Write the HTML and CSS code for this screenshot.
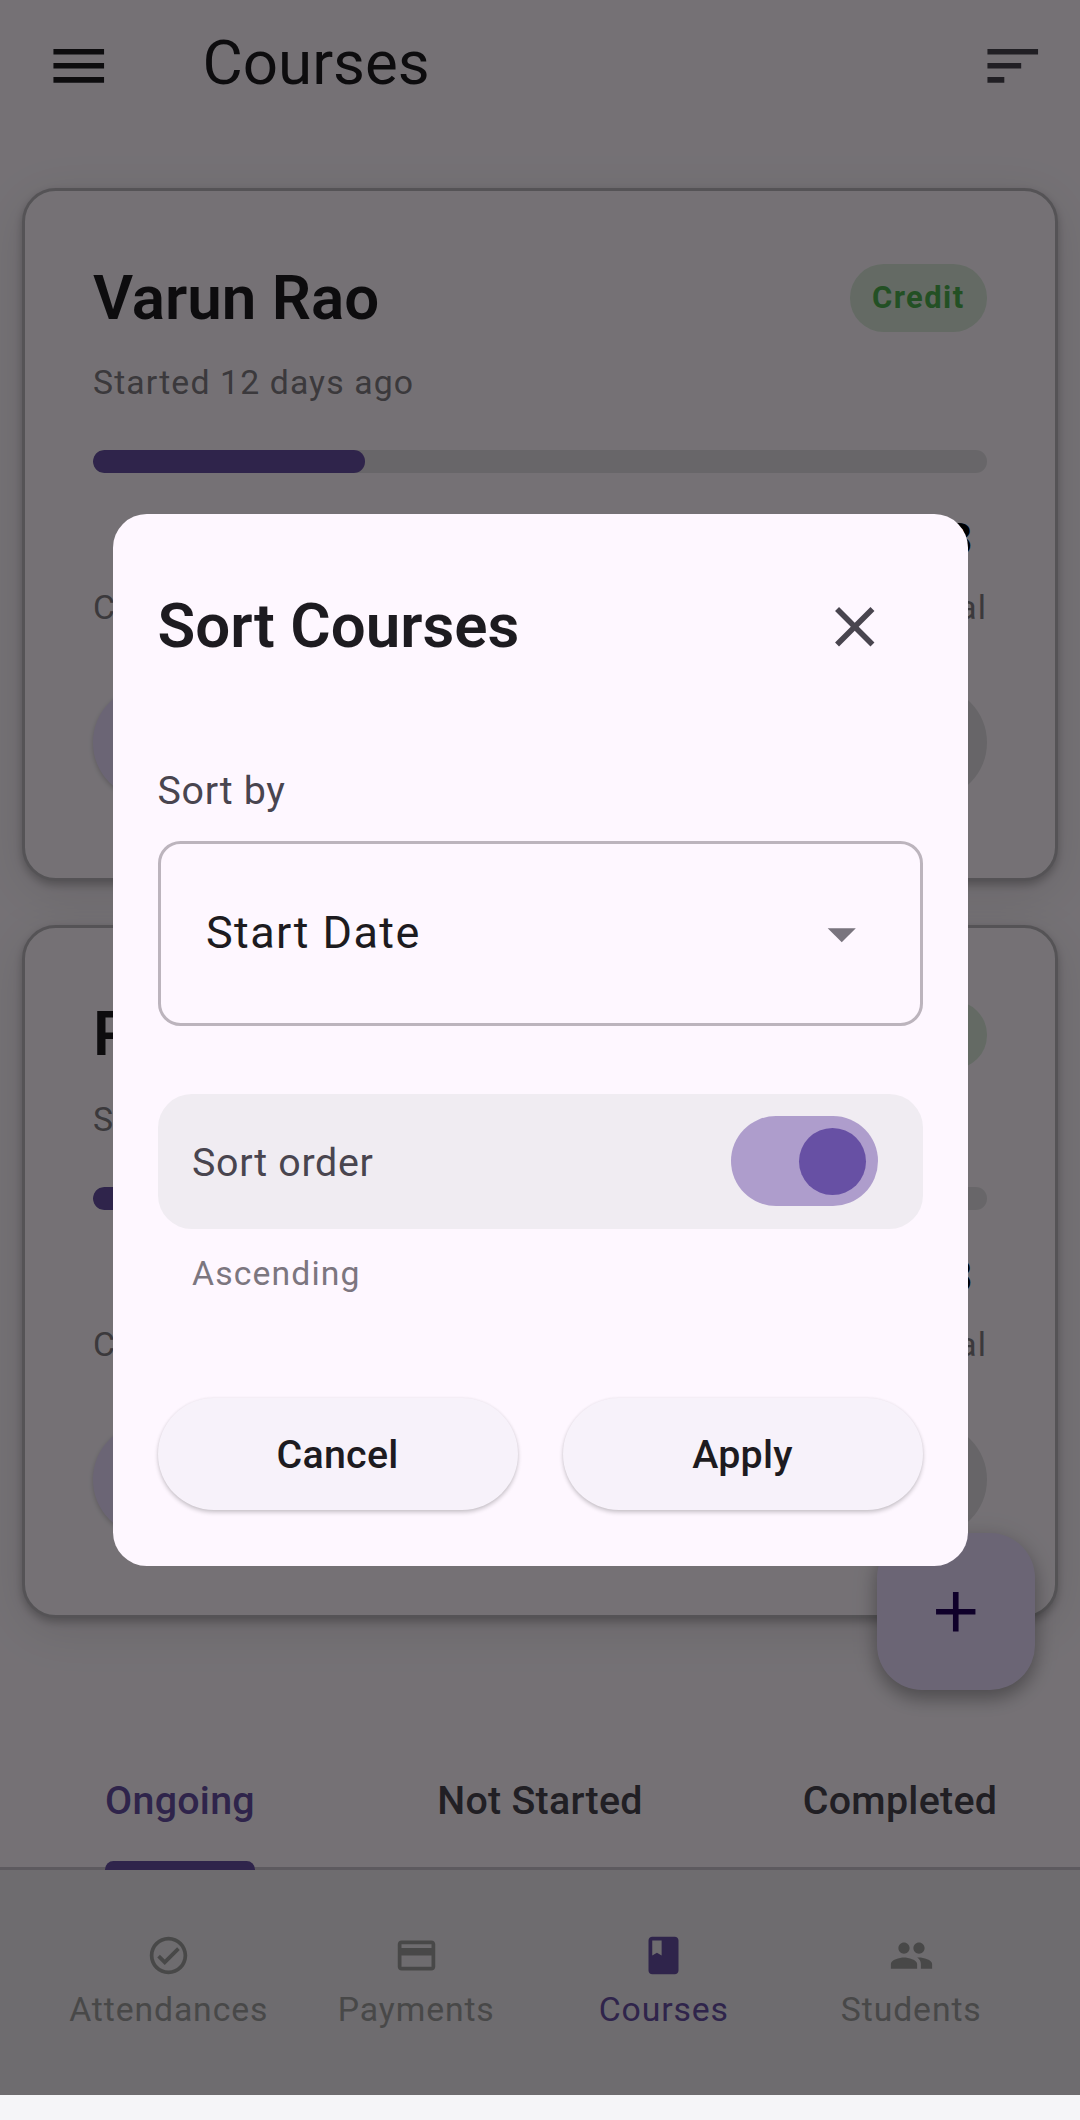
FILE: index.html
```html
<!DOCTYPE html>
<html lang="en">
<head>
<meta charset="utf-8">
<title>Courses</title>
<link rel="stylesheet" href="styles.css">
</head>
<body>
<div class="screen">
  <header class="app-bar">
    <svg class="icon" viewBox="0 0 24 24"><path d="M3 18h18v-2H3v2zm0-5h18v-2H3v2zm0-7v2h18V6H3z"/></svg>
    <h1 class="app-title">Courses</h1>
    <svg class="icon icon-sort" viewBox="0 0 24 24"><path d="M3 18h6v-2H3v2zM3 6v2h18V6H3zm0 7h12v-2H3v2z"/></svg>
  </header>

  <main class="course-list">
    <article class="card">
      <div class="card-head">
        <h2 class="name">Varun Rao</h2>
        <span class="badge">Credit</span>
      </div>
      <p class="started">Started 12 days ago</p>
      <div class="progress"><div class="progress-fill" style="width:30.43%"></div></div>
      <div class="stats">
        <div class="stat"><span class="value">7</span><span class="label">Completed</span></div>
        <div class="stat"><span class="value">23</span><span class="label">Total</span></div>
      </div>
      <div class="actions"><span class="action action-main"></span><span class="action action-off"></span></div>
    </article>
    <article class="card">
      <div class="card-head">
        <h2 class="name">Priya</h2>
        <span class="badge">Credit</span>
      </div>
      <p class="started">Started</p>
      <div class="progress"><div class="progress-fill" style="width:30.43%"></div></div>
      <div class="stats">
        <div class="stat"><span class="value">7</span><span class="label">Completed</span></div>
        <div class="stat"><span class="value">23</span><span class="label">Total</span></div>
      </div>
      <div class="actions"><span class="action action-main"></span><span class="action action-off"></span></div>
    </article>
  </main>

  <div class="tabs">
    <div class="tab tab-active"><span>Ongoing</span></div>
    <div class="tab"><span>Not Started</span></div>
    <div class="tab"><span>Completed</span></div>
  </div>

  <nav class="bottom-nav">
    <div class="nav-item">
      <svg viewBox="0 0 24 24"><path d="M12 2C6.48 2 2 6.48 2 12s4.48 10 10 10 10-4.48 10-10S17.52 2 12 2zm0 18c-4.41 0-8-3.59-8-8s3.59-8 8-8 8 3.59 8 8-3.59 8-8 8zm4.59-12.42L10 14.17l-2.59-2.58L6 13l4 4 8-8z"/></svg>
      <span>Attendances</span>
    </div>
    <div class="nav-item">
      <svg viewBox="0 0 24 24"><path d="M20 4H4c-1.11 0-1.99.89-1.99 2L2 18c0 1.11.89 2 2 2h16c1.11 0 2-.89 2-2V6c0-1.11-.89-2-2-2zm0 14H4v-6h16v6zm0-10H4V6h16v2z"/></svg>
      <span>Payments</span>
    </div>
    <div class="nav-item nav-active">
      <svg viewBox="0 0 24 24"><path d="M18 2H6c-1.1 0-2 .9-2 2v16c0 1.1.9 2 2 2h12c1.1 0 2-.9 2-2V4c0-1.1-.9-2-2-2zM6 4h5v8l-2.500-1.500L6 12V4z"/></svg>
      <span>Courses</span>
    </div>
    <div class="nav-item">
      <svg viewBox="0 0 24 24"><path d="M16 11c1.660 0 2.990-1.340 2.990-3S17.660 5 16 5c-1.660 0-3 1.340-3 3s1.340 3 3 3zm-8 0c1.660 0 2.990-1.340 2.990-3S9.660 5 8 5C6.340 5 5 6.340 5 8s1.340 3 3 3zm0 2c-2.330 0-7 1.170-7 3.500V19h14v-2.500c0-2.330-4.670-3.500-7-3.500zm8 0c-.29 0-.62.02-.97.05 1.160.84 1.970 1.970 1.970 3.450V19h6v-2.500c0-2.330-4.670-3.500-7-3.500z"/></svg>
      <span>Students</span>
    </div>
  </nav>

  <div class="fab"><svg class="icon" viewBox="0 0 24 24"><path d="M19 13h-6v6h-2v-6H5v-2h6V5h2v6h6v2z"/></svg></div>

  <div class="scrim">
    <section class="dialog">
      <div class="dialog-head">
        <h2 class="dialog-title">Sort Courses</h2>
        <svg class="icon icon-close" viewBox="0 0 24 24"><path d="M19 6.410L17.590 5 12 10.590 6.410 5 5 6.410 10.590 12 5 17.590 6.410 19 12 13.410 17.590 19 19 17.590 13.410 12z"/></svg>
      </div>
      <p class="field-label">Sort by</p>
      <div class="select">
        <span>Start Date</span>
        <svg class="icon icon-drop" viewBox="0 0 24 24"><path d="M7 10l5 5 5-5z"/></svg>
      </div>
      <div class="order">
        <span>Sort order</span>
        <div class="switch"><div class="thumb"></div></div>
      </div>
      <p class="hint">Ascending</p>
      <div class="buttons">
        <div class="button">Cancel</div>
        <div class="button">Apply</div>
      </div>
    </section>
  </div>
</div>
</body>
</html>
```
FILE: styles.css
```css
* { box-sizing: border-box; margin: 0; padding: 0; }

body {
  width: 1080px;
  height: 2120px;
  background: #f5f5f8;
  font-family: Roboto, "Liberation Sans", sans-serif;
  color: #1d1b20;
  overflow: hidden;
}

.screen {
  position: relative;
  display: flex;
  flex-direction: column;
  height: 2094.7px;
  background: #fef7ff;
  overflow: hidden;
}

.icon { width: 67.5px; height: 67.5px; fill: currentColor; flex: none; }

/* App bar */
.app-bar {
  display: flex;
  align-items: center;
  height: 131px;
  padding: 0 34px 0 45px;
}
.app-title {
  flex: 1;
  margin-left: 90px;
  padding-bottom: 5px;
  font-size: 61.875px;
  line-height: 78.75px;
  font-weight: 400;
}
.icon-sort { color: #49454f; }

/* Course cards */
.course-list {
  flex: 1;
  display: flex;
  flex-direction: column;
  gap: 44.4px;
  padding: 57px 22.5px 0 22px;
}
.card {
  height: 692.6px;
  flex: none;
  padding: 67.5px 67.5px 67.5px 68px;
  border: 3px solid #b9b6bb;
  border-radius: 33.75px;
  background: #fef7ff;
  box-shadow: 0 4px 9px rgba(0, 0, 0, .24), 0 11px 50px rgba(0, 0, 0, .1);
}
.card-head {
  display: flex;
  justify-content: space-between;
  align-items: center;
  height: 78.75px;
}
.name { font-size: 61.875px; line-height: 78.75px; font-weight: 600; }
.badge {
  padding: 11.25px 22.5px;
  border-radius: 33.75px;
  background: #d9e8d9;
  color: #4caf50;
  font-size: 30.94px;
  line-height: 45px;
  font-weight: 700;
  letter-spacing: 1.4px;
}
.started {
  margin-top: 22.8px;
  font-size: 33.75px;
  line-height: 45px;
  letter-spacing: 1.125px;
  color: #827c83;
}
.progress {
  height: 22.5px;
  margin-top: 45px;
  border-radius: 11.25px;
  background: #e3dfe5;
  overflow: hidden;
}
.progress-fill { height: 100%; border-radius: 11.25px; background: #6750a4; }
.stats { display: flex; justify-content: space-between; margin-top: 33.75px; }
.stat { display: flex; flex-direction: column; align-items: center; }
.value { font-size: 45px; line-height: 67.5px; font-weight: 700; color: #000; }
.label {
  margin-top: 11.25px;
  font-size: 33.75px;
  line-height: 45px;
  letter-spacing: 1.125px;
  color: #827c83;
}
.actions { display: flex; gap: 22.5px; margin-top: 56.25px; }
.action { flex: 1; height: 112.5px; border-radius: 56.25px; }
.action-main { background: #eaddff; box-shadow: 0 2px 5px rgba(0, 0, 0, .2); }
.action-off { background: #e1dde3; }

/* Tabs */
.tabs {
  display: flex;
  height: 135px;
  flex: none;
  border-bottom: 3px solid #cac4d0;
}
.tab {
  flex: 1;
  display: flex;
  justify-content: center;
  font-size: 39.375px;
  line-height: 131px;
  font-weight: 500;
  letter-spacing: .28px;
  color: #49454f;
}
.tab span { position: relative; height: 135px; }
.tab-active { color: #6750a4; }
.tab-active span::after {
  content: "";
  position: absolute;
  left: 0;
  right: 0;
  bottom: 0;
  height: 8.4px;
  border-radius: 8.4px 8.4px 0 0;
  background: #6750a4;
}

/* Bottom navigation */
.bottom-nav {
  display: flex;
  height: 225px;
  flex: none;
  padding: 63.3px 45px 0;
  background: #efebf1;
}
.nav-item {
  flex: 1;
  display: flex;
  flex-direction: column;
  align-items: center;
  gap: 8.6px;
  color: #9e9e9e;
  font-size: 33.75px;
  line-height: 45px;
  letter-spacing: .88px;
}
.nav-item svg { width: 45px; height: 45px; fill: currentColor; }
.nav-active { color: #6750a4; }

.fab {
  position: absolute;
  left: 877px;
  top: 1532.5px;
  width: 157.5px;
  height: 157.5px;
  display: flex;
  align-items: center;
  justify-content: center;
  border-radius: 45px;
  background: #eaddff;
  color: #21005d;
  box-shadow: 0 9px 17px rgba(0, 0, 0, .26), 0 3px 28px rgba(0, 0, 0, .12);
}

/* Sort dialog */
.scrim { position: absolute; inset: 0; background: rgba(0, 0, 0, .54); }
.dialog {
  width: 855px;
  height: 1052px;
  margin: 514.4px auto 0;
  padding: 45px;
  border-radius: 33.75px;
  background: #fef7ff;
}
.dialog-head { display: flex; align-items: center; justify-content: space-between; height: 135px; }
.dialog-title { padding-bottom: 2px; font-size: 61.875px; line-height: 78.75px; font-weight: 600; }
.icon-close { margin-right: 33.75px; color: #49454f; }
.field-label {
  margin-top: 68.2px;
  font-size: 39.375px;
  line-height: 56.25px;
  letter-spacing: .7px;
  color: #49454f;
}
.select {
  display: flex;
  align-items: center;
  justify-content: space-between;
  height: 185.6px;
  margin-top: 22px;
  padding: 0 44.5px 0 45.5px;
  border: 3px solid #bcb4bd;
  border-radius: 22.5px;
  font-size: 45px;
  letter-spacing: 1.4px;
}
.select span { padding-bottom: 2px; }
.icon-drop { color: #79747e; }
.order {
  display: flex;
  align-items: center;
  justify-content: space-between;
  height: 135px;
  margin-top: 67.5px;
  padding: 0 45px 0 34.5px;
  border-radius: 33.75px;
  background: #f0ecf2;
  color: #49454f;
  font-size: 39.375px;
  letter-spacing: .7px;
}
.order span { padding-top: 2px; }
.switch {
  display: flex;
  align-items: center;
  justify-content: flex-end;
  width: 146.25px;
  height: 90px;
  padding-right: 11.25px;
  border-radius: 45px;
  background: #ae9dcc;
}
.thumb { width: 67.5px; height: 67.5px; border-radius: 50%; background: #6750a4; }
.hint {
  margin: 22.5px 0 0 34.5px;
  font-size: 33.75px;
  line-height: 45px;
  letter-spacing: 1.125px;
  color: #7c767f;
}
.buttons { display: flex; gap: 45px; margin-top: 101.3px; }
.button {
  flex: 1;
  height: 112.5px;
  border-radius: 56.25px;
  background: #f7f2fa;
  box-shadow: 0 2.5px 4px rgba(0, 0, 0, .2), 0 0 3px rgba(0, 0, 0, .06);
  text-align: center;
  font-size: 39.375px;
  line-height: 114.5px;
  font-weight: 500;
  letter-spacing: .28px;
}
```
